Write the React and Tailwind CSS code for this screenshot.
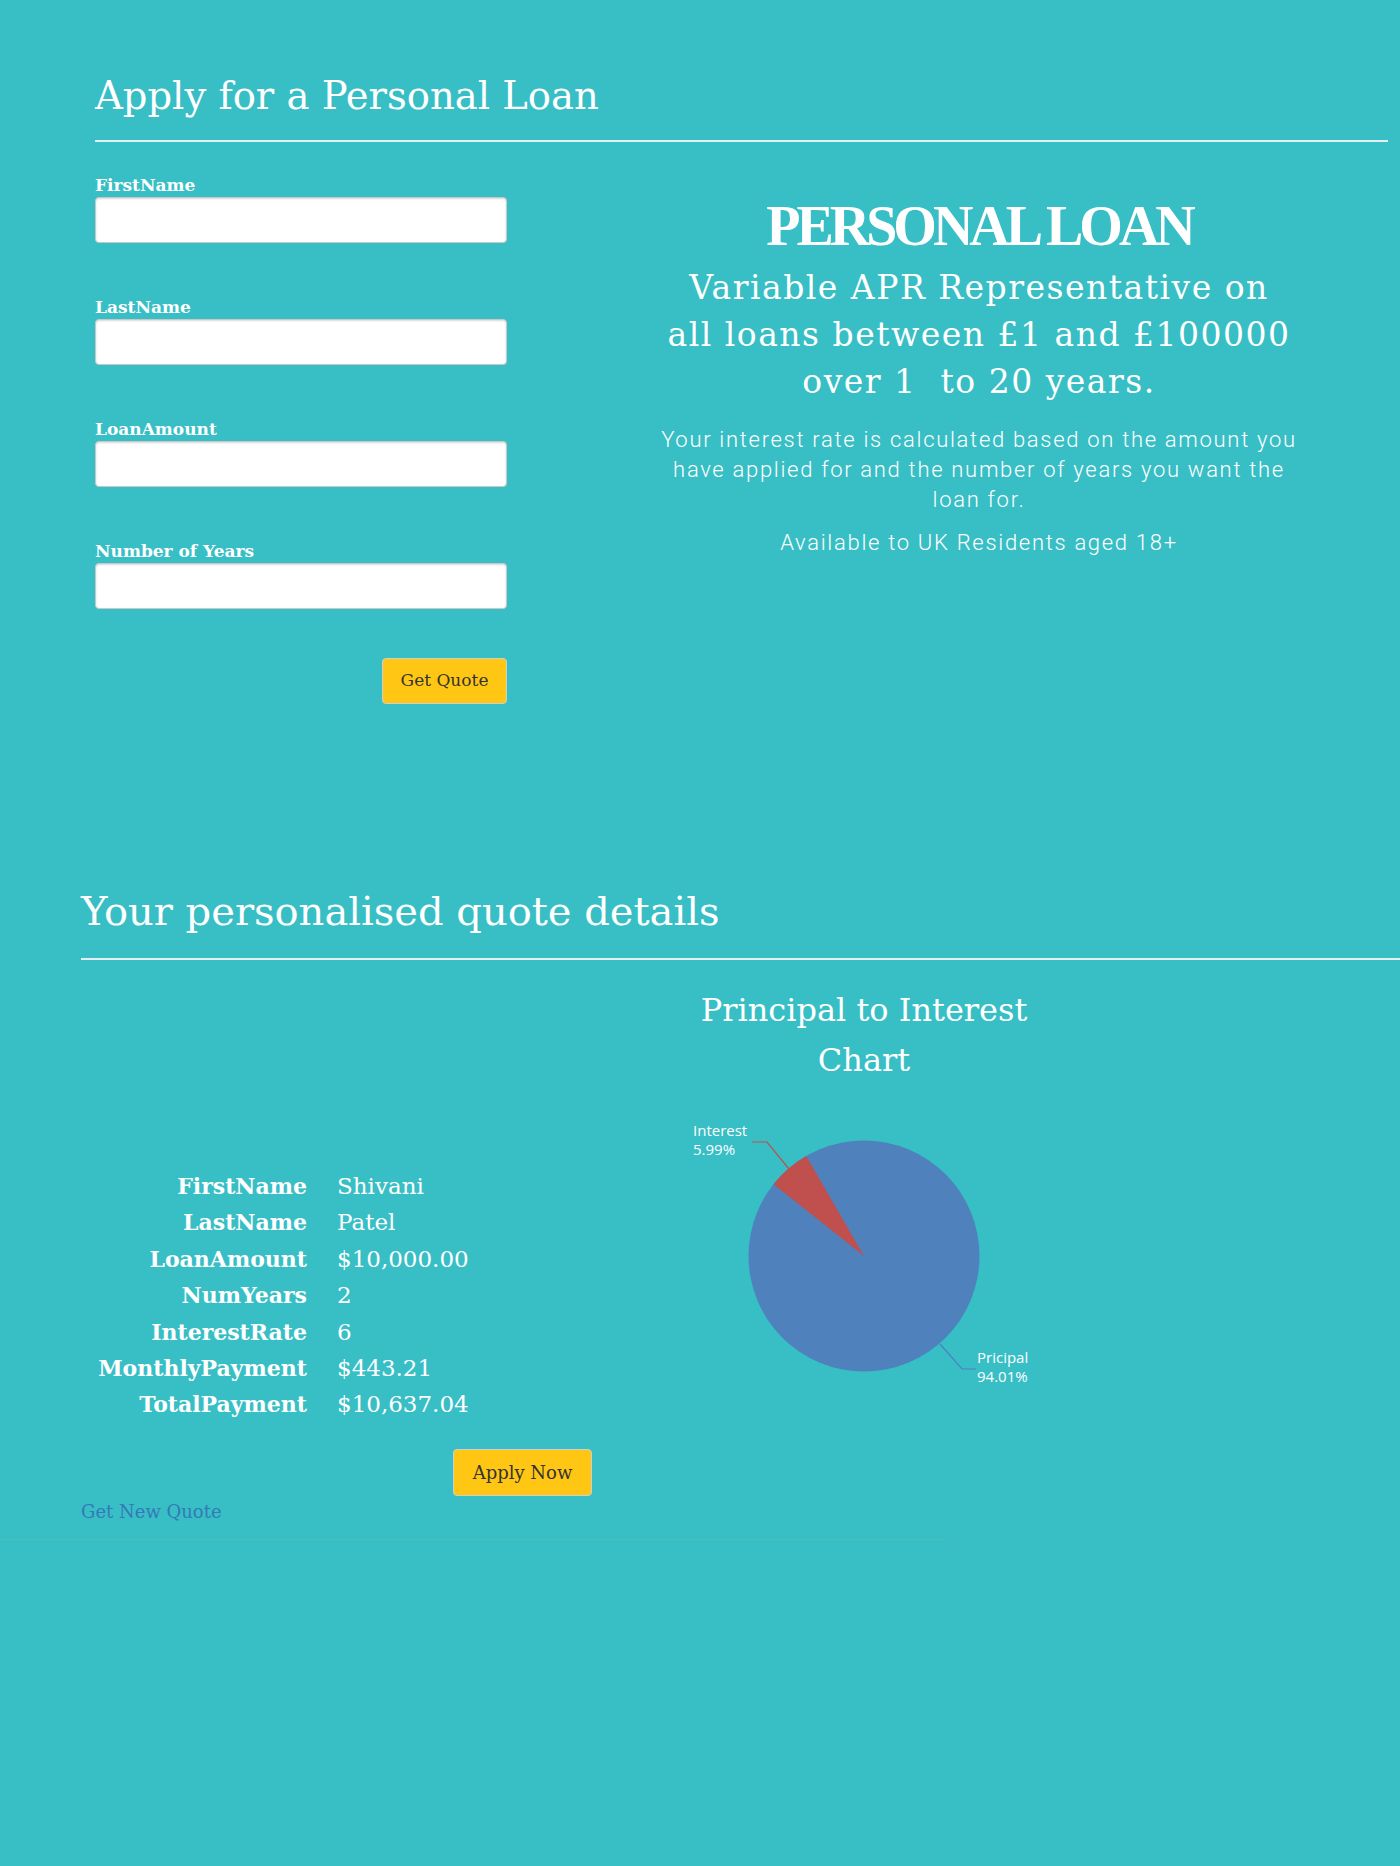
import React from "react";

const serif = "font-['DejaVu_Serif',serif]";

function Field({ label, last }) {
  return (
    <div className={last ? "" : "mb-[54px]"}>
      <label className="block text-[17px] leading-[20px] font-bold text-white">{label}</label>
      <input
        type="text"
        className="mt-[2px] block h-[46px] w-[412px] rounded-[4px] border border-[#c8c8c8] bg-white shadow-[inset_0_1px_2px_rgba(0,0,0,0.15)] outline-none"
      />
    </div>
  );
}

function Pie() {
  return (
    <svg width="360" height="280" viewBox="0 0 360 280" className="mx-auto block">
      <circle cx="180" cy="140" r="115.5" fill="#4f81bd" />
      <path d="M180,140 L122.25,39.97 A115.5,115.5 0 0 0 89.52,68.2 Z" fill="#c0504d" />
      <polyline points="68,26 83,26 105,53" fill="none" stroke="#c0504d" strokeWidth="1.2" />
      <polyline points="256,228 278,253 292,253" fill="none" stroke="#4f81bd" strokeWidth="1.2" />
      <g fill="#ffffff" fontFamily="'Open Sans', sans-serif" fontSize="15">
        <text x="9" y="20">Interest</text>
        <text x="9" y="39">5.99%</text>
        <text x="293" y="247">Pricipal</text>
        <text x="293" y="266">94.01%</text>
      </g>
    </svg>
  );
}

const rows = [
  ["FirstName", "Shivani"],
  ["LastName", "Patel"],
  ["LoanAmount", "$10,000.00"],
  ["NumYears", "2"],
  ["InterestRate", "6"],
  ["MonthlyPayment", "$443.21"],
  ["TotalPayment", "$10,637.04"],
];

export default function App() {
  return (
    <div className={`min-h-[1866px] w-full overflow-hidden bg-[#38bec5] text-white ${serif}`}>
      {/* Section 1 */}
      <div className="pl-[95px] pr-[12px] pt-[71px]">
        <h1 className="text-[38.5px] leading-[50px] font-normal">Apply for a Personal Loan</h1>
        <div className="mt-[19px] h-[2px] bg-[#e3eff0]" />
        <div className="flex">
          <form className="mt-[33px] w-[412px]" onSubmit={(e) => e.preventDefault()}>
            <Field label="FirstName" />
            <Field label="LastName" />
            <Field label="LoanAmount" />
            <Field label="Number of Years" last />
            <div className="mt-[49px] flex justify-end">
              <button
                type="submit"
                className="h-[46px] w-[125px] rounded-[4px] border border-[#cfcfcf] bg-[#ffc714] text-[17px] text-[#333]"
              >
                Get Quote
              </button>
            </div>
          </form>
          <div className="ml-[142px] w-[660px] text-center">
            <div className="mt-[54px] font-['Liberation_Serif',serif] text-[56px] leading-[60px] font-bold tracking-[-4px]">
              PERSONAL LOAN
            </div>
            <div className="mt-[8px] text-[33px] leading-[47px] tracking-[1.5px]">
              Variable APR Representative on
              <br />
              all loans between £1 and £100000
              <br />
              over 1&nbsp; to 20 years.
            </div>
            <p className="mt-[20px] w-full font-['Roboto',sans-serif] text-[22px] leading-[30px] font-light tracking-[1.7px]">
              Your interest rate is calculated based on the amount you have applied for and the number of years you want the loan for.
            </p>
            <p className="mt-[13px] font-['Roboto',sans-serif] text-[22px] leading-[30px] font-light tracking-[1.7px]">
              Available to UK Residents aged 18+
            </p>
          </div>
        </div>
      </div>

      {/* Section 2 */}
      <div className="mt-[182px] pl-[81px]">
        <h2 className="text-[40px] leading-[50px] font-normal">Your personalised quote details</h2>
        <div className="mt-[22px] h-[2px] bg-[#e3eff0]" />
        <div className="flex">
          <div className="w-[519px]">
            <table className="mt-[208px] border-collapse text-[23px]">
              <tbody>
                {rows.map(([k, v]) => (
                  <tr key={k} className="h-[36.4px] leading-[36.4px]">
                    <td className="w-[226px] p-0 text-right text-[22px] font-bold">{k}</td>
                    <td className="p-0 pl-[30px]">{v}</td>
                  </tr>
                ))}
              </tbody>
            </table>
            <button className="ml-[372px] mt-[26px] block h-[47px] w-[139px] rounded-[4px] border border-[#cfcfcf] bg-[#ffc714] text-[18px] text-[#333]">
              Apply Now
            </button>
            <a href="#" className="mt-[4px] block text-[18px] leading-[24px] text-[#337ab7]">
              Get New Quote
            </a>
          </div>
          <div className="w-[528px] text-center">
            <div className="mx-auto mt-[25px] w-[380px] text-[32px] leading-[50px]">Principal to Interest Chart</div>
            <div className="mt-[31px]">
              <Pie />
            </div>
          </div>
        </div>
      </div>
      <div className="mt-[15px] h-px w-[947px] bg-[#52b9bf]" />
    </div>
  );
}
